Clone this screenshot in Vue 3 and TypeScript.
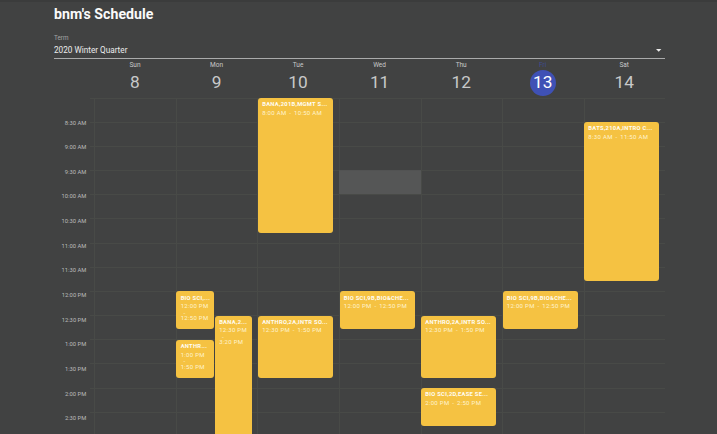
<script setup lang="ts">
interface Day {
  name: string
  date: number
  today?: boolean
}

interface CalendarEvent {
  day: number
  start: number
  end: number
  title: string
  from: string
  to: string
  lane?: 'first' | 'second'
}

const days: Day[] = [
  { name: 'Sun', date: 8 },
  { name: 'Mon', date: 9 },
  { name: 'Tue', date: 10 },
  { name: 'Wed', date: 11 },
  { name: 'Thu', date: 12 },
  { name: 'Fri', date: 13, today: true },
  { name: 'Sat', date: 14 },
]

const times: string[] = [
  '8:30 AM', '9:00 AM', '9:30 AM', '10:00 AM', '10:30 AM', '11:00 AM', '11:30 AM',
  '12:00 PM', '12:30 PM', '1:00 PM', '1:30 PM', '2:00 PM', '2:30 PM',
]

// Event times are hours on a 24-hour clock.
const events: CalendarEvent[] = [
  { day: 1, start: 12, end: 12.8, title: 'BIO SCI,...', from: '12:00 PM', to: '12:50 PM', lane: 'first' },
  { day: 1, start: 13, end: 13.8, title: 'ANTHR...', from: '1:00 PM', to: '1:50 PM', lane: 'first' },
  { day: 1, start: 12.5, end: 15.33, title: 'BANA,2...', from: '12:30 PM', to: '3:20 PM', lane: 'second' },
  { day: 2, start: 8, end: 10.81, title: 'BANA,201B,MGMT S...', from: '8:00 AM', to: '10:50 AM' },
  { day: 2, start: 12.5, end: 13.8, title: 'ANTHRO,2A,INTR SO...', from: '12:30 PM', to: '1:50 PM' },
  { day: 3, start: 12, end: 12.8, title: 'BIO SCI,9B,BIO&CHE...', from: '12:00 PM', to: '12:50 PM' },
  { day: 4, start: 12.5, end: 13.8, title: 'ANTHRO,2A,INTR SO...', from: '12:30 PM', to: '1:50 PM' },
  { day: 4, start: 14, end: 14.8, title: 'BIO SCI,2D,EASE SE...', from: '2:00 PM', to: '2:50 PM' },
  { day: 5, start: 12, end: 12.8, title: 'BIO SCI,9B,BIO&CHE...', from: '12:00 PM', to: '12:50 PM' },
  { day: 6, start: 8.5, end: 11.79, title: 'BATS,210A,INTRO C...', from: '8:30 AM', to: '11:50 AM' },
]

const slotHeight = 24.18
const slots = 14

const place = (e: CalendarEvent) => ({
  top: `${((e.start - 8) * 2 * slotHeight + 0.5).toFixed(1)}px`,
  height: `${((e.end - e.start) * 2 * slotHeight - 0.7).toFixed(1)}px`,
})
</script>

<template>
  <main class="page">
    <h1 class="title">bnm's Schedule</h1>
    <div class="select">
      <span class="select-label">Term</span>
      <div class="select-value">
        <span>2020 Winter Quarter</span>
        <svg class="caret" viewBox="0 0 10 5"><path d="M0 0h10L5 5z" /></svg>
      </div>
    </div>
    <section class="calendar">
      <header class="days">
        <div v-for="d in days" :key="d.name" class="day" :class="{ today: d.today }">
          <span class="day-name">{{ d.name }}</span>
          <span class="day-date">{{ d.date }}</span>
        </div>
      </header>
      <div class="body">
        <div class="times">
          <span v-for="t in times" :key="t" class="time">{{ t }}</span>
        </div>
        <div class="tick-col">
          <i v-for="s in slots" :key="s" class="slot"></i>
        </div>
        <div v-for="(d, i) in days" :key="d.name" class="column">
          <i v-for="s in slots" :key="s" class="slot" :class="{ hovered: i === 3 && s === 4 }"></i>
          <article
            v-for="e in events.filter((x) => x.day === i)"
            :key="e.from"
            class="event"
            :class="e.lane"
            :style="place(e)"
          >
            <div class="event-title">{{ e.title }}</div>
            <div class="event-time">
              <span>{{ e.from }}</span><span class="dash">-</span><span>{{ e.to }}</span>
            </div>
          </article>
        </div>
      </div>
    </section>
  </main>
</template>

<style>
body {
  background: #414242;
}
</style>

<style scoped>
.page {
  box-sizing: border-box;
  width: 717px;
  height: 434px;
  padding: 4px 52px 0 54px;
  border-top: 2px solid #3b3c3c;
  overflow: hidden;
  background: #414242;
  color: #ececec;
  font-family: Roboto, "Liberation Sans", sans-serif;
}
.title {
  margin: 0;
  height: 27px;
  font-size: 14.15px;
  line-height: 17px;
  font-weight: 700;
  letter-spacing: 0.05px;
  color: #fafafa;
}
.select {
  box-sizing: border-box;
  width: 611px;
  height: 25.5px;
  border-bottom: 1px solid #aaabab;
}
.select-label {
  display: block;
  height: 11px;
  font-size: 6.3px;
  line-height: 10px;
  color: #a4a5a5;
}
.select-value {
  display: flex;
  justify-content: space-between;
  align-items: center;
  height: 12px;
  padding-right: 3.5px;
  font-size: 8.2px;
  line-height: 12px;
}
.caret {
  width: 5.4px;
  height: 2.7px;
  margin-top: 1px;
  fill: #ececec;
}
.days {
  display: flex;
  height: 39px;
  padding-left: 40.2px;
}
.day {
  display: flex;
  flex: 0 0 81.55px;
  flex-direction: column;
  align-items: center;
  color: #c8c9c9;
}
.day-name {
  box-sizing: border-box;
  height: 11px;
  padding-top: 1px;
  font-size: 6.5px;
  line-height: 10px;
}
.day-date {
  width: 26px;
  height: 26px;
  border-radius: 50%;
  font-size: 17.3px;
  line-height: 25px;
  text-align: center;
}
.today .day-name {
  color: #3f4b94;
}
.today .day-date {
  background: #3f51b5;
  color: #fff;
}
.body {
  display: flex;
  width: 611px;
}
.times {
  flex: 0 0 32.3px;
  padding-top: 13px;
}
.time {
  display: block;
  height: 24.66px;
  font-size: 5.8px;
  line-height: 24.66px;
  text-align: right;
  white-space: nowrap;
  color: #bcbdbd;
}
.tick-col {
  flex: 0 0 4px;
  margin-left: 4.1px;
}
.column {
  position: relative;
  flex: 0 0 81.55px;
  box-sizing: border-box;
  border-left: 1px solid #484a47;
}
.slot {
  display: block;
  box-sizing: border-box;
  height: 24.18px;
  border-top: 1px solid #484a47;
}
.slot.hovered {
  margin-left: -1px;
  border-color: #525353;
  background: #555656;
}
.event {
  position: absolute;
  left: -0.5px;
  box-sizing: border-box;
  width: 75.2px;
  padding: 3.3px 0 0 4.2px;
  border-radius: 3px;
  background: #f5c242;
  color: #fffdf4;
  white-space: nowrap;
}
.event.first,
.event.second {
  width: 37.5px;
}
.event.second {
  left: 38px;
}
.event-title {
  font-size: 5.8px;
  line-height: 7.5px;
  font-weight: 700;
  letter-spacing: 0.29px;
}
.event-time {
  font-size: 6px;
  line-height: 8.4px;
  letter-spacing: 0.3px;
  color: #fff3cf;
}
.dash {
  margin: 0 2.8px;
}
.first .event-time span,
.second .event-time span {
  display: block;
}
.first .event-time .dash,
.second .event-time .dash {
  height: 3.6px;
  line-height: 3.6px;
}
</style>
